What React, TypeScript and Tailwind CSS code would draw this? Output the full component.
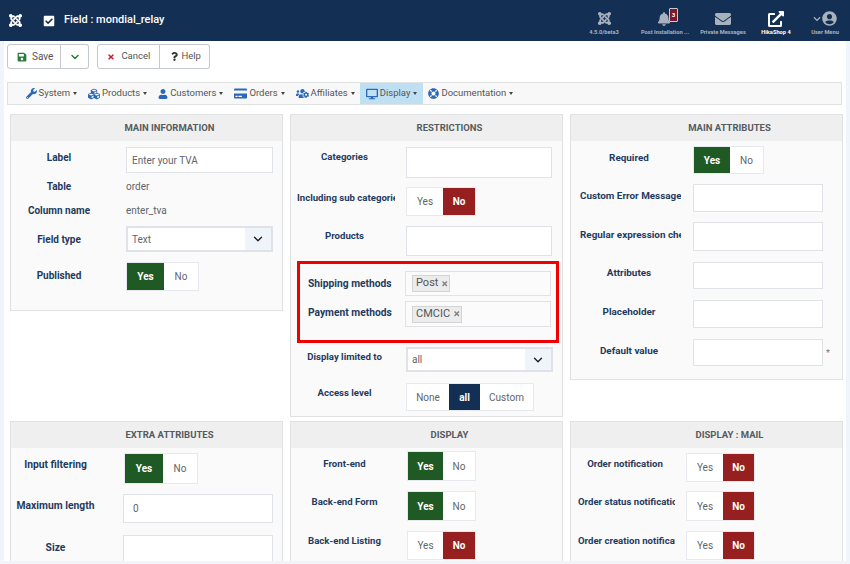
import React from "react";
import { ChevronDown } from "lucide-react";
import { FaJoomla, FaCheckSquare, FaSave, FaTimes, FaQuestion, FaWrench, FaCubes, FaUser, FaCreditCard, FaUsersCog, FaDesktop, FaLifeRing, FaBell, FaEnvelope, FaExternalLinkAlt, FaUserCircle, FaChevronDown } from "react-icons/fa";

const labelCls = "overflow-hidden whitespace-nowrap pt-[1px] text-center leading-[14px] font-bold text-[#1f3a5f]";

function Toggle({ opts, active, widths, cls }: { opts: string[]; active: number; widths: string[]; cls: string }) {
  return (
    <div className={`flex border border-[#e6e9ee] bg-white ${cls}`}>
      {opts.map((o, i) => {
        const on = i === active;
        const bg = on ? (o === "Yes" ? "bg-[#1f5a25] text-white font-bold" : o === "No" ? "bg-[#962020] text-white font-bold" : "bg-[#132f53] text-white font-bold") : "text-[#5f656b]";
        return (
          <span key={o} className={`flex items-center justify-center text-[10px] ${widths[i]} ${bg}`}>
            {o}
          </span>
        );
      })}
    </div>
  );
}

function Select({ value, cls }: { value: string; cls: string }) {
  return (
    <div className={`flex items-center border-2 border-[#dfe3e8] bg-white ${cls}`}>
      <span className="flex-1 pl-[4px] text-[10px] text-[#5f656b]">{value}</span>
      <span className="flex h-full w-[26px] items-center justify-center bg-[#eff3fa]">
        <ChevronDown size={14} strokeWidth={2.25} className="text-[#1b1b1b]" />
      </span>
    </div>
  );
}

function Input({ cls, value }: { cls: string; value?: string }) {
  return (
    <div className={`flex items-center border border-[#dfe3e8] bg-white text-[10px] text-[#5f656b] ${cls}`}>{value}</div>
  );
}

function Chip({ text, cls }: { text: string; cls: string }) {
  return (
    <span className={`flex items-center gap-[3px] border border-[#d4d4d4] bg-[#ececec] pl-[3px] text-[11px] text-[#555] ${cls}`}>
      {text}
      <FaTimes className="text-[7.5px] text-[#808080]" />
    </span>
  );
}

function Row({ label, lw, ltop, cls, gap, children }: { label: string; lw: string; ltop: string; cls: string; gap: string; children: React.ReactNode }) {
  return (
    <div className={`flex items-start ${cls}`}>
      <div className={`${labelCls} ${lw} ${ltop} ${gap}`}>{label}</div>
      {children}
    </div>
  );
}

function Panel({ title, cls, children }: { title: string; cls: string; children: React.ReactNode }) {
  return (
    <section className={`overflow-hidden border border-[#dfe1e3] bg-[#fafafa] ${cls}`}>
      <h3 className="flex h-[26px] items-center justify-center bg-[#efefef] pl-[46px] text-[9.5px] font-bold text-[#555b60]">{title}</h3>
      {children}
    </section>
  );
}

const menu = [
  { t: "System", i: <FaWrench className="text-[11px] text-[#2a69b8]" />, cls: "" },
  { t: "Products", i: <FaCubes className="text-[12px] text-[#2a69b8]" />, cls: "" },
  { t: "Customers", i: <FaUser className="text-[10px] text-[#2a69b8]" />, cls: "" },
  { t: "Orders", i: <FaCreditCard className="text-[13px] text-[#2a69b8]" />, cls: "" },
  { t: "Affiliates", i: <FaUsersCog className="text-[13px] text-[#2a69b8]" />, cls: "" },
  { t: "Display", i: <FaDesktop className="text-[12px] text-[#2a69b8]" />, cls: "bg-[#bfe0f3]" },
  { t: "Documentation", i: <FaLifeRing className="text-[11px] text-[#2a69b8]" />, cls: "" },
];

function TopIcon({ icon, text, cls }: { icon: React.ReactNode; text: string; cls: string }) {
  return (
    <div className={`relative flex flex-col items-center ${cls}`}>
      <div className="mt-[2px] flex h-[18px] items-center">{icon}</div>
      <span className="whitespace-nowrap text-[5.7px] leading-[8px] font-bold">{text}</span>
    </div>
  );
}

export default function App() {
  return (
    <div className="h-[564px] w-[850px] overflow-hidden bg-[#f0f4fb] font-['Roboto',sans-serif]">
      <header className="flex h-[41px] items-center bg-[#132f53] text-white">
        <FaJoomla className="ml-[8px] text-[15px]" />
        <FaCheckSquare className="ml-[20px] text-[12px]" />
        <span className="ml-[9px] text-[11px] font-medium">Field : mondial_relay</span>
        <div className="ml-auto mr-[3px] mt-[2px] flex items-start text-[#a8b2bf]">
          <TopIcon cls="w-[50px]" text="4.5.0/beta3" icon={<FaJoomla className="text-[15px]" />} />
          <TopIcon cls="ml-[10px] w-[52px]" text="Post Installation ..." icon={
            <>
              <FaBell className="mr-[2px] text-[14px]" />
              <span className="absolute left-[30px] top-0 flex h-[14px] w-[9px] items-center justify-center rounded-[1px] border border-[#c3cad4] bg-[#7b1a2c] text-[6px] font-bold text-white">3</span>
            </>
          } />
          <TopIcon cls="ml-[8px] w-[48px]" text="Private Messages" icon={<FaEnvelope className="text-[16px]" />} />
          <TopIcon cls="ml-[9px] w-[40px] text-white" text="HikaShop 4" icon={<FaExternalLinkAlt className="text-[16px]" />} />
          <TopIcon cls="ml-[7px] w-[44px]" text="User Menu" icon={
            <>
              <FaChevronDown className="mr-[1px] text-[8px]" />
              <FaUserCircle className="text-[15px]" />
            </>
          } />
        </div>
      </header>

      <main className="mx-[4px] h-[520px] w-[842px] bg-white">
        <div className="flex h-[33px] items-start pl-[3px] pt-[3px]">
          <div className="flex h-[25px] items-center rounded-l-[3px] border border-[#c3c8cd] pl-[9px] pr-[7px] text-[10px] text-[#555]">
            <FaSave className="mr-[5px] text-[10px] text-[#2a7a3a]" />Save
          </div>
          <div className="flex h-[25px] w-[28px] items-center justify-center rounded-r-[3px] border border-l-0 border-[#c3c8cd]">
            <ChevronDown size={12} strokeWidth={3} className="text-[#2a7a3a]" />
          </div>
          <div className="ml-[8px] flex h-[25px] w-[63px] items-center rounded-l-[3px] border border-[#c3c8cd] pl-[9px] text-[9.5px] text-[#555]">
            <FaTimes className="mr-[6px] text-[8px] text-[#c4202a]" />Cancel
          </div>
          <div className="flex h-[25px] w-[50px] items-center rounded-r-[3px] border border-l-0 border-[#c3c8cd] pl-[10px] text-[9.5px] text-[#555]">
            <FaQuestion className="mr-[2px] text-[9px] text-[#333]" />Help
          </div>
        </div>

        <nav className="ml-[3px] mt-[8px] flex h-[23px] w-[835px] items-stretch border border-[#dfe1e3] bg-[#f8f8f8] pl-[12px] text-[9.5px] text-[#555]">
          {menu.map((m) => (
            <div key={m.t} className={`flex items-center px-[5.5px] ${m.cls}`}>
              {m.i}
              <span className="ml-[2px]">{m.t}</span>
              <span className="ml-[3px] h-0 w-0 border-x-[2.5px] border-t-[3px] border-x-transparent border-t-[#444]" />
            </div>
          ))}
        </nav>

        <div className="ml-[6px] mt-[9px] grid w-[833px] grid-cols-[273px_273px_273px] items-start gap-x-[7px] gap-y-[4px]">
          <Panel title="MAIN INFORMATION" cls="h-[197px]">
            <Row label="Label" lw="w-[96px] text-[10px]" ltop="mt-[3px]" gap="mr-[19px]" cls="mt-[6px]">
              <Input cls="h-[26px] w-[147px] pl-[5px]" value="Enter your TVA" />
            </Row>
            <Row label="Table" lw="w-[96px] text-[10px]" ltop="mt-[0px]" gap="mr-[19px]" cls="mt-[6px]">
              <span className="pt-[1px] text-[10px] leading-[14px] text-[#5f656b]">order</span>
            </Row>
            <Row label="Column name" lw="w-[96px] text-[10px]" ltop="mt-[0px]" gap="mr-[19px]" cls="mt-[9px]">
              <span className="pt-[1px] text-[10px] leading-[14px] text-[#5f656b]">enter_tva</span>
            </Row>
            <Row label="Field type" lw="w-[96px] text-[10px]" ltop="mt-[6px]" gap="mr-[19px]" cls="mt-[8px]">
              <Select value="Text" cls="h-[26px] w-[147px]" />
            </Row>
            <Row label="Published" lw="w-[96px] text-[10px]" ltop="mt-[6px]" gap="mr-[19px]" cls="mt-[10px]">
              <Toggle opts={["Yes", "No"]} active={0} widths={["w-[37px]", "w-[34px]"]} cls="h-[29px]" />
            </Row>
          </Panel>

          <Panel title="RESTRICTIONS" cls="h-[303px]">
            <Row label="Categories" lw="w-[98px] pr-[3px] text-[9.6px]" ltop="mt-[2px]" gap="mr-[11px]" cls="mt-[6px] pl-[6px]">
              <Input cls="h-[31px] w-[146px]" />
            </Row>
            <Row label="Including sub categories" lw="w-[98px] text-[9.6px]" ltop="mt-[3px]" gap="mr-[11px]" cls="mt-[9px] pl-[6px]">
              <Toggle opts={["Yes", "No"]} active={1} widths={["w-[36px]", "w-[32px]"]} cls="h-[29px]" />
            </Row>
            <Row label="Products" lw="w-[98px] pr-[3px] text-[9.6px]" ltop="mt-[2px]" gap="mr-[11px]" cls="mt-[10px] pl-[6px]">
              <Input cls="h-[30px] w-[146px]" />
            </Row>
            <div className="ml-[6px] mt-[5px] h-[82px] w-[262px] border-[3px] border-[#f00000] pl-[8px] pr-[5px] pt-[7px]">
              <div className="flex items-start">
                <span className="mt-[5px] w-[97px] text-[10.25px] leading-[16px] font-bold text-[#1f3a5f]">Shipping methods</span>
                <div className="flex h-[25px] w-[146px] items-center border border-[#dfe3e8] bg-[#fbfbfb] pl-[6px]">
                  <Chip text="Post" cls="h-[17px] w-[38px]" />
                </div>
              </div>
              <div className="mt-[5px] flex items-start">
                <span className="mt-[4px] w-[97px] text-[10.25px] leading-[16px] font-bold text-[#1f3a5f]">Payment methods</span>
                <div className="flex h-[26px] w-[146px] items-center border border-[#dfe3e8] bg-[#fbfbfb] pl-[6px]">
                  <Chip text="CMCIC" cls="h-[17px] w-[50px]" />
                </div>
              </div>
            </div>
            <Row label="Display limited to" lw="w-[98px] pr-[3px] text-[9.6px]" ltop="mt-[2px]" gap="mr-[11px]" cls="mt-[4px] pl-[6px]">
              <Select value="all" cls="h-[25px] w-[147px]" />
            </Row>
            <Row label="Access level" lw="w-[98px] pr-[3px] text-[9.6px]" ltop="mt-[2px]" gap="mr-[11px]" cls="mt-[11px] pl-[6px]">
              <Toggle opts={["None", "all", "Custom"]} active={1} widths={["w-[42px]", "w-[31px]", "w-[53px]"]} cls="h-[28px]" />
            </Row>
          </Panel>

          <Panel title="MAIN ATTRIBUTES" cls="h-[266px]">
            <Row label="Required" lw="w-[101px] pr-[3px] text-[9.9px]" ltop="mt-[4px]" gap="mr-[12px]" cls="mt-[5px] pl-[9px]">
              <Toggle opts={["Yes", "No"]} active={0} widths={["w-[36px]", "w-[33px]"]} cls="h-[28px]" />
            </Row>
            <Row label="Custom Error Message" lw="w-[101px] text-[9.9px]" ltop="mt-[4px]" gap="mr-[12px]" cls="mt-[10px] pl-[9px]">
              <Input cls="h-[28px] w-[130px]" />
            </Row>
            <Row label="Regular expression check" lw="w-[101px] text-[9.9px]" ltop="mt-[5px]" gap="mr-[12px]" cls="mt-[10px] pl-[9px]">
              <Input cls="h-[29px] w-[130px]" />
            </Row>
            <Row label="Attributes" lw="w-[101px] pr-[3px] text-[9.9px]" ltop="mt-[3px]" gap="mr-[12px]" cls="mt-[11px] pl-[9px]">
              <Input cls="h-[27px] w-[130px]" />
            </Row>
            <Row label="Placeholder" lw="w-[101px] pr-[3px] text-[9.9px]" ltop="mt-[4px]" gap="mr-[12px]" cls="mt-[11px] pl-[9px]">
              <Input cls="h-[28px] w-[130px]" />
            </Row>
            <Row label="Default value" lw="w-[101px] pr-[3px] text-[9.9px]" ltop="mt-[4px]" gap="mr-[12px]" cls="mt-[11px] pl-[9px]">
              <Input cls="h-[27px] w-[130px]" />
              <span className="ml-[3px] mt-[7px] text-[9px] leading-[14px] text-[#777]">*</span>
            </Row>
          </Panel>

          <Panel title="EXTRA ATTRIBUTES" cls="h-[140px] border-b-0">
            <Row label="Input filtering" lw="w-[89px] text-[10.3px]" ltop="mt-[4px]" gap="mr-[23px]" cls="mt-[5px]">
              <Toggle opts={["Yes", "No"]} active={0} widths={["w-[38px]", "w-[34px]"]} cls="ml-[1px] h-[31px]" />
            </Row>
            <Row label="Maximum length" lw="w-[89px] text-[10.3px]" ltop="mt-[4px]" gap="mr-[23px]" cls="mt-[10px]">
              <Input cls="h-[29px] w-[150px] pl-[9px]" value="0" />
            </Row>
            <Row label="Size" lw="w-[89px] text-[10.3px]" ltop="mt-[5px]" gap="mr-[23px]" cls="mt-[12px]">
              <Input cls="h-[30px] w-[150px]" />
            </Row>
          </Panel>

          <Panel title="DISPLAY" cls="h-[140px] border-b-0">
            <Row label="Front-end" lw="w-[98px] pr-[3px] text-[9.6px]" ltop="mt-[5px]" gap="mr-[12px]" cls="mt-[3px] pl-[6px]">
              <Toggle opts={["Yes", "No"]} active={0} widths={["w-[35px]", "w-[32px]"]} cls="h-[30px]" />
            </Row>
            <Row label="Back-end Form" lw="w-[98px] pr-[3px] text-[9.6px]" ltop="mt-[3px]" gap="mr-[12px]" cls="mt-[10px] pl-[6px]">
              <Toggle opts={["Yes", "No"]} active={0} widths={["w-[35px]", "w-[32px]"]} cls="h-[30px]" />
            </Row>
            <Row label="Back-end Listing" lw="w-[98px] pr-[3px] text-[9.6px]" ltop="mt-[2px]" gap="mr-[12px]" cls="mt-[10px] pl-[6px]">
              <Toggle opts={["Yes", "No"]} active={1} widths={["w-[35px]", "w-[32px]"]} cls="h-[29px]" />
            </Row>
          </Panel>

          <Panel title="DISPLAY : MAIL" cls="h-[140px] border-b-0">
            <Row label="Order notification" lw="w-[97px] pr-[3px] text-[9.6px]" ltop="mt-[3px]" gap="mr-[11px]" cls="mt-[5px] pl-[7px]">
              <Toggle opts={["Yes", "No"]} active={1} widths={["w-[36px]", "w-[31px]"]} cls="h-[29px]" />
            </Row>
            <Row label="Order status notification" lw="w-[97px] text-[9.6px]" ltop="mt-[3px]" gap="mr-[11px]" cls="mt-[9px] pl-[7px]">
              <Toggle opts={["Yes", "No"]} active={1} widths={["w-[36px]", "w-[31px]"]} cls="h-[30px]" />
            </Row>
            <Row label="Order creation notification" lw="w-[97px] text-[9.6px]" ltop="mt-[2px]" gap="mr-[11px]" cls="mt-[10px] pl-[7px]">
              <Toggle opts={["Yes", "No"]} active={1} widths={["w-[36px]", "w-[31px]"]} cls="h-[29px]" />
            </Row>
          </Panel>
        </div>
      </main>
    </div>
  );
}
